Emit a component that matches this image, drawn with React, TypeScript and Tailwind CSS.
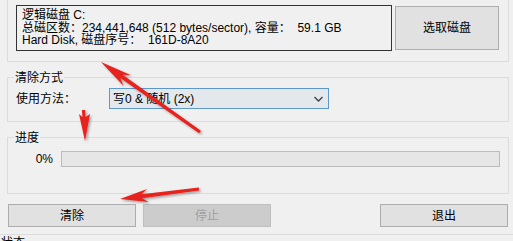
import React from "react";

const font = "font-['Liberation_Sans','Noto_Sans_CJK_SC',sans-serif]";

const GroupLabel: React.FC<{ text: string }> = ({ text }) => (
  <span className="absolute left-[6px] top-[-7px] px-[1px] bg-[#f0f0f0] text-[12px] leading-[14px] text-black">
    {text}
  </span>
);

const Arrows: React.FC = () => (
  <svg
    className="absolute left-0 top-0 pointer-events-none"
    width={513}
    height={241}
    viewBox="0 0 513 241"
  >
    <defs>
      <filter id="sh" x="-20%" y="-20%" width="140%" height="140%">
        <feDropShadow dx="1.5" dy="1.5" stdDeviation="1.2" floodColor="#000" floodOpacity="0.35" />
      </filter>
    </defs>
    <g fill="#e8201c" filter="url(#sh)">
      {/* top-left arrow */}
      <polygon points="101,62 131,75.2 122.6,74.8 200.9,130.8 199.1,133.2 120.3,78.1 123.4,85.8" />
      {/* short down arrow */}
      <polygon points="82,110 85,110 85.6,117 90,114 85,141 79,114 82.4,117" />
      {/* arrow to the clear button */}
      <polygon points="120,199 147,189 141.6,194.2 198.8,187.5 199.2,190.5 142.1,198.2 148.6,201.9" />
    </g>
  </svg>
);

export default function App() {
  return (
    <div className={`relative w-[513px] h-[241px] overflow-hidden bg-[#f0f0f0] text-black ${font}`}>
      {/* disk info group */}
      <div className="ml-[7px] mt-[-10px] w-[502px] h-[72px] border border-[#dcdcdc] flex items-start pl-[8px] pt-[14px]">
        <div className="w-[376px] h-[46px] border border-[#333333] px-[5px] pt-[3px] text-[12px] leading-[12.5px] whitespace-nowrap">
          <div>逻辑磁盘 C:</div>
          <div>总磁区数：234,441,648 (512 bytes/sector), 容量：&nbsp;&nbsp;59.1 GB</div>
          <div>Hard Disk, 磁盘序号：&nbsp;&nbsp;161D-8A20</div>
        </div>
        <button className="ml-[3px] mt-[1px] w-[104px] h-[44px] border border-[#adadad] bg-[#e1e1e1] text-[12px]">
          选取磁盘
        </button>
      </div>

      {/* wipe method */}
      <div className="relative ml-[7px] mt-[15px] w-[502px] h-[45px] border border-[#dcdcdc]">
        <GroupLabel text="清除方式" />
        <div className="flex items-center pl-[8px] pt-[10px]">
          <span className="w-[93px] text-[12px] leading-[14px]">使用方法：</span>
          <div className="flex items-center justify-between w-[220px] h-[21px] border border-[#5e97c9] bg-[#e3e8ed] pl-[3px] pr-[5px] text-[12px]">
            <span>写0 &amp; 随机 (2x)</span>
            <svg width="9" height="6" viewBox="0 0 9 6">
              <polyline points="0.5,1 4.5,5 8.5,1" fill="none" stroke="#404040" strokeWidth="1.3" />
            </svg>
          </div>
        </div>
      </div>

      {/* progress */}
      <div className="relative ml-[7px] mt-[15px] w-[502px] h-[57px] border border-[#dcdcdc]">
        <GroupLabel text="进度" />
        <div className="flex items-center pt-[13px]">
          <span className="w-[45px] text-right text-[12px] leading-[14px]">0%</span>
          <div className="ml-[8px] w-[439px] h-[16px] border border-[#bcbcbc] bg-[#e6e6e6]" />
        </div>
      </div>

      {/* buttons */}
      <div className="flex ml-[8px] mt-[10px] w-[500px]">
        <button className="w-[128px] h-[23px] border border-[#adadad] bg-[#e1e1e1] text-[12px]">清除</button>
        <button className="ml-[7px] w-[128px] h-[23px] border border-[#bfbfbf] bg-[#cccccc] text-[12px] text-[#a0a0a0]">
          停止
        </button>
        <button className="ml-auto w-[128px] h-[23px] border border-[#adadad] bg-[#e1e1e1] text-[12px]">退出</button>
      </div>

      {/* status bar */}
      <div className="mt-[7px] border-t border-[#dcdcdc] pl-[1px] pt-[1px] text-[12px] leading-[14px]">状态</div>

      <Arrows />
    </div>
  );
}
